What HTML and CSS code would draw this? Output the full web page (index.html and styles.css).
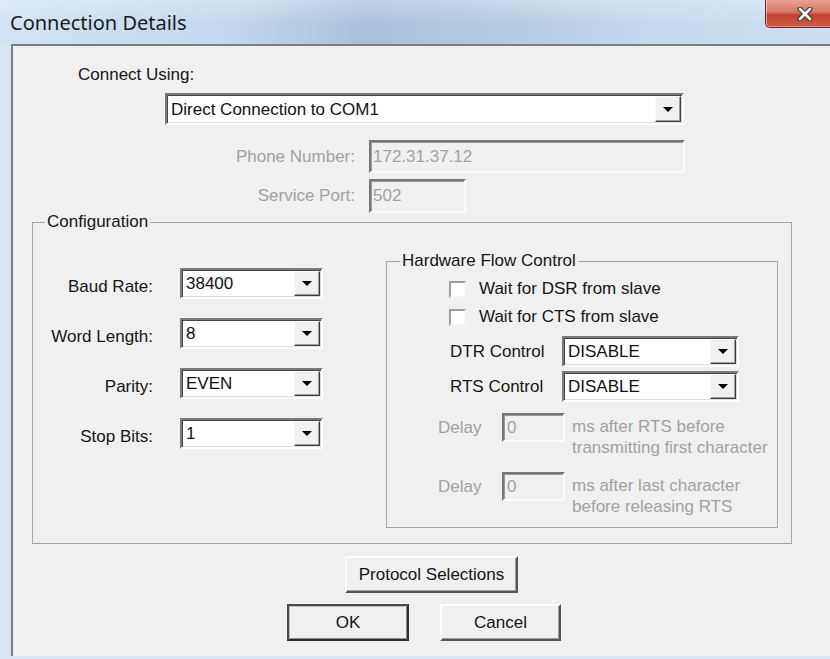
FILE: index.html
```html
<!DOCTYPE html>
<html lang="en">
<head>
<meta charset="utf-8">
<title>Connection Details</title>
<link rel="stylesheet" href="styles.css">
</head>
<body>
<div class="window">
  <header class="titlebar">
    <span class="title">Connection Details</span>
    <button class="close" aria-label="Close">
      <svg width="16" height="14" viewBox="0 0 16 14" aria-hidden="true">
        <path d="M3 2 L13 12 M13 2 L3 12" stroke="#3b3b3b" stroke-width="5" stroke-linecap="round"/>
        <path d="M3 2 L13 12 M13 2 L3 12" stroke="#ffffff" stroke-width="2.6" stroke-linecap="round"/>
      </svg>
    </button>
  </header>

  <div class="frame">
    <main class="client">
      <div class="connect-label">Connect Using:</div>
      <div class="combo combo-main">
        <span class="combo-text">Direct Connection to COM1</span>
        <span class="combo-btn"><i class="arrow"></i></span>
      </div>

      <div class="addr-grid">
        <span class="dim addr-label">Phone Number:</span>
        <div class="field phone">172.31.37.12</div>
        <span class="dim addr-label">Service Port:</span>
        <div class="field port">502</div>
      </div>

      <fieldset class="group config">
        <legend>Configuration</legend>
        <div class="config-body">
          <div class="serial-grid">
            <span class="serial-label">Baud Rate:</span>
            <div class="combo"><span class="combo-text">38400</span><span class="combo-btn"><i class="arrow"></i></span></div>
            <span class="serial-label">Word Length:</span>
            <div class="combo"><span class="combo-text">8</span><span class="combo-btn"><i class="arrow"></i></span></div>
            <span class="serial-label">Parity:</span>
            <div class="combo"><span class="combo-text">EVEN</span><span class="combo-btn"><i class="arrow"></i></span></div>
            <span class="serial-label">Stop Bits:</span>
            <div class="combo"><span class="combo-text">1</span><span class="combo-btn"><i class="arrow"></i></span></div>
          </div>

          <fieldset class="group hfc">
            <legend>Hardware Flow Control</legend>
            <div class="checks">
              <div class="check-row"><span class="check"></span><span>Wait for DSR from slave</span></div>
              <div class="check-row"><span class="check"></span><span>Wait for CTS from slave</span></div>
            </div>
            <div class="ctrl-grid">
              <span class="ctrl-label">DTR Control</span>
              <div class="combo"><span class="combo-text">DISABLE</span><span class="combo-btn"><i class="arrow"></i></span></div>
              <span class="ctrl-label">RTS Control</span>
              <div class="combo"><span class="combo-text">DISABLE</span><span class="combo-btn"><i class="arrow"></i></span></div>
            </div>
            <div class="delay-row first">
              <span class="dim delay-label">Delay</span>
              <div class="field delay">0</div>
              <span class="dim delay-note">ms after RTS before<br>transmitting first character</span>
            </div>
            <div class="delay-row second">
              <span class="dim delay-label">Delay</span>
              <div class="field delay">0</div>
              <span class="dim delay-note">ms after last character<br>before releasing RTS</span>
            </div>
          </fieldset>
        </div>
      </fieldset>

      <div class="proto-row">
        <button class="btn proto">Protocol Selections</button>
      </div>
      <div class="action-row">
        <button class="btn btn-default ok">OK</button>
        <button class="btn cancel">Cancel</button>
      </div>
    </main>
  </div>
</div>
</body>
</html>
```

FILE: styles.css
```css
* { box-sizing: border-box; }

html, body {
  margin: 0;
  padding: 0;
}

body {
  width: 830px;
  height: 659px;
  overflow: hidden;
  background: #d9e5f1;
  font-family: "Liberation Sans", Arial, sans-serif;
  font-size: 17px;
  color: #161616;
}

.window {
  width: 830px;
  height: 659px;
  display: flex;
  flex-direction: column;
}

/* ---------- caption bar ---------- */
.titlebar {
  height: 44px;
  flex: none;
  display: flex;
  align-items: flex-start;
  justify-content: space-between;
  background:
    linear-gradient(180deg, rgba(255,255,255,0.28) 0%, rgba(255,255,255,0) 55%),
    linear-gradient(90deg, #d3e3f3 0%, #c3d7ec 28%, #a8c1dc 44%, #b2c9e1 58%, #c4d8ec 78%, #cfdfef 100%);
}

.title {
  font-family: "Noto Sans", "Open Sans", sans-serif;
  font-size: 20px;
  line-height: 26px;
  color: #1b1b1b;
  padding: 10px 0 0 10px;
}

.close {
  width: 65px;
  height: 28px;
  margin: 0;
  padding: 0 0 0 14px;
  border: 1px solid #6b2a22;
  border-top: none;
  border-right: none;
  border-radius: 0 0 0 5px;
  background: linear-gradient(180deg, #e6a394 0%, #d87564 45%, #c2412c 55%, #cf5a43 100%);
  box-shadow: inset 1px 0 0 rgba(255,255,255,0.45), inset 0 -1px 0 rgba(255,255,255,0.35);
  display: flex;
  align-items: center;
  justify-content: center;
}

/* ---------- window frame and client area ---------- */
.frame {
  flex: 1;
  padding: 0 0 3px 11px;
  display: flex;
}

.client {
  flex: 1;
  background: #f0f0f0;
  border-top: 2px solid #7c7c7c;
  border-left: 2px solid #7c7c7c;
  box-shadow: inset -13px 0 0 #eff0f2;
}

.dim { color: #a2a2a2; }

.connect-label {
  margin: 19px 0 0 65px;
  line-height: 20px;
}

/* ---------- drop-down combo ---------- */
.combo {
  display: flex;
  height: 31px;
  background: #fff;
  border: 2px solid;
  border-color: #7a7a7a #fdfdfd #fdfdfd #7a7a7a;
  box-shadow: inset 1px 1px 0 #454545, inset -1px -1px 0 #dedede;
}

.combo-text {
  flex: 1;
  padding: 1px 0 0 4px;
  line-height: 20px;
  display: flex;
  align-items: center;
  white-space: nowrap;
  color: #111;
}

.combo-btn {
  width: 26px;
  margin: 1px 1px 1px 0;
  background: #f0f0f0;
  border: 1px solid;
  border-color: #fafafa #3e3e3e #3e3e3e #fafafa;
  box-shadow: inset -1px -1px 0 #9e9e9e;
  display: flex;
  align-items: center;
  justify-content: center;
}

.arrow {
  width: 0;
  height: 0;
  border-left: 5px solid transparent;
  border-right: 5px solid transparent;
  border-top: 5px solid #000;
}

.combo-main {
  margin: 8px 0 0 152px;
  width: 519px;
  height: 32px;
}

/* ---------- disabled edit fields ---------- */
.field {
  background: #f0f0f0;
  border: 2px solid;
  border-color: #767676 #fbfbfb #fbfbfb #767676;
  box-shadow: inset 1px 1px 0 #9a9a9a;
  color: #a2a2a2;
  line-height: 20px;
  padding: 0 0 0 2px;
  display: flex;
  align-items: center;
}

.addr-grid {
  display: grid;
  grid-template-columns: 342px auto;
  column-gap: 14px;
  row-gap: 6px;
  margin-top: 15px;
  align-items: center;
}

.addr-label {
  text-align: right;
  line-height: 20px;
}

.phone { width: 316px; height: 33px; }
.port  { width: 97px;  height: 34px; }

/* ---------- group boxes ---------- */
.group {
  margin: 0;
  padding: 0;
  min-width: 0;
  border: 1px solid #a6a6a6;
}

.group legend {
  padding: 0 2px;
  line-height: 18px;
}

.config {
  margin: 0 0 0 19px;
  width: 760px;
  height: 331px;
}

.config legend { margin-left: 12px; }

.config-body {
  display: grid;
  grid-template-columns: 353px 392px;
  align-items: start;
}

.serial-grid {
  margin-top: 37px;
  display: grid;
  grid-template-columns: 120px 143px;
  grid-auto-rows: 31px;
  column-gap: 27px;
  row-gap: 19px;
}

.serial-label {
  text-align: right;
  line-height: 20px;
  padding-top: 9px;
}

.hfc {
  margin-top: 20px;
  height: 277px;
}

.hfc legend {
  margin-left: 13px;
  line-height: 20px;
}

.checks {
  margin-top: 8px;
  padding-left: 62px;
  display: flex;
  flex-direction: column;
  gap: 8px;
}

.check-row {
  display: flex;
  align-items: center;
  gap: 13px;
  height: 20px;
  line-height: 20px;
}

.check {
  width: 17px;
  height: 17px;
  background: #fff;
  border: 2px solid;
  border-color: #9c9c9c #f4f4f4 #f4f4f4 #9c9c9c;
}

.ctrl-grid {
  margin-top: 9px;
  padding-left: 63px;
  display: grid;
  grid-template-columns: 112px 177px;
  grid-auto-rows: 31px;
  row-gap: 4px;
  align-items: center;
}

.ctrl-label { line-height: 20px; }

.delay-row {
  display: grid;
  grid-template-columns: 64px 63px auto;
  column-gap: 0;
  align-items: start;
  padding-left: 51px;
}

.delay-row.first  { margin-top: 11px; }
.delay-row.second { margin-top: 14px; }

.delay-label { line-height: 29px; }

.delay {
  height: 29px;
  padding-left: 3px;
}

.delay-note {
  margin: 3px 0 0 7px;
  line-height: 21px;
  white-space: nowrap;
}

/* ---------- push buttons ---------- */
.btn {
  font-family: "Liberation Sans", Arial, sans-serif;
  font-size: 17px;
  color: #141414;
  height: 37px;
  padding: 0;
  background: #f0f0f0;
  border: 2px solid;
  border-color: #fdfdfd #555 #555 #fdfdfd;
  box-shadow: inset -1px -1px 0 #9c9c9c;
}

.btn-default {
  border-color: #4c4c4c #2f2f2f #2f2f2f #4c4c4c;
  box-shadow: inset 1px 1px 0 #bdbdbd, inset -1px -1px 0 #8a8a8a;
}

.proto-row {
  margin-top: 12px;
  padding-left: 332px;
  display: flex;
}

.proto { width: 173px; }

.action-row {
  margin-top: 11px;
  padding-left: 274px;
  display: flex;
  gap: 31px;
}

.ok { width: 122px; }
.cancel { width: 121px; }
```
